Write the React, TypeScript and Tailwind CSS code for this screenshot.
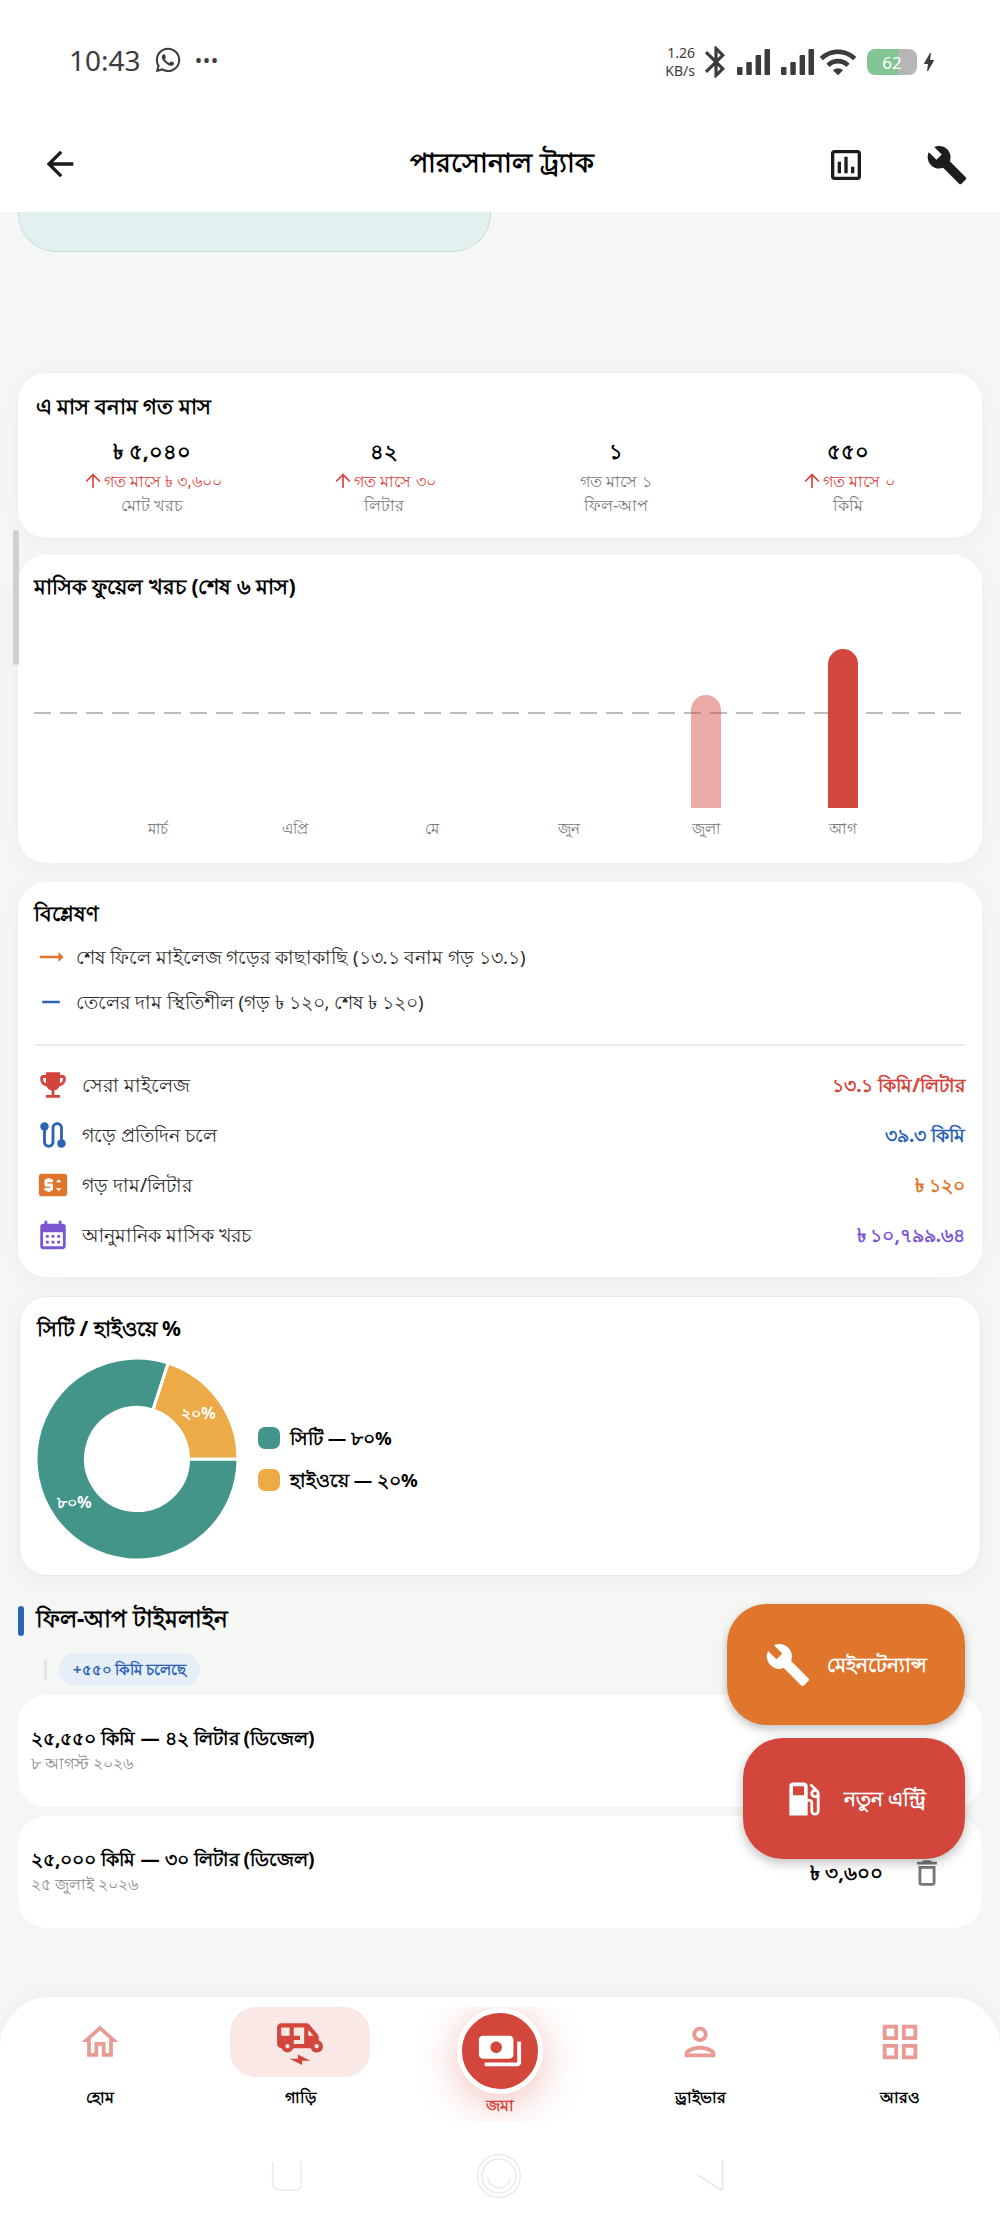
import type { ReactNode } from 'react';
import { ArrowUp } from 'lucide-react';
import { FaWhatsapp } from 'react-icons/fa';
import {
  MdArrowBack,
  MdBluetooth,
  MdBolt,
  MdBuild,
  MdCalendarMonth,
  MdDeleteOutline,
  MdElectricRickshaw,
  MdEmojiEvents,
  MdGridView,
  MdLocalGasStation,
  MdOutlineAssessment,
  MdOutlineHome,
  MdOutlinePerson,
  MdPayments,
  MdPriceChange,
  MdRemove,
  MdRoute,
  MdTrendingFlat,
  MdWifi,
} from 'react-icons/md';

const stats = [
  { value: '৳ ৫,০৪০', change: 'গত মাসে ৳ ৩,৬০০', label: 'মোট খরচ', up: true },
  { value: '৪২', change: 'গত মাসে ৩০', label: 'লিটার', up: true },
  { value: '১', change: 'গত মাসে ১', label: 'ফিল-আপ', up: false },
  { value: '৫৫০', change: 'গত মাসে ০', label: 'কিমি', up: true },
];

const months = [
  { name: 'মার্চ', bar: '' },
  { name: 'এপ্রি', bar: '' },
  { name: 'মে', bar: '' },
  { name: 'জুন', bar: '' },
  { name: 'জুলা', bar: 'h-[113px] bg-[#d2463c]/45' },
  { name: 'আগ', bar: 'h-[159px] bg-[#d2483e]' },
];

const metrics = [
  { icon: MdEmojiEvents, label: 'সেরা মাইলেজ', value: '১৩.১ কিমি/লিটার', color: 'text-[#d2443c]' },
  { icon: MdRoute, label: 'গড়ে প্রতিদিন চলে', value: '৩৯.৩ কিমি', color: 'text-[#2b63b5]' },
  { icon: MdPriceChange, label: 'গড় দাম/লিটার', value: '৳ ১২০', color: 'text-[#e0752c]' },
  { icon: MdCalendarMonth, label: 'আনুমানিক মাসিক খরচ', value: '৳ ১০,৭৯৯.৬৪', color: 'text-[#7a57d1]' },
];

const fillups = [
  { title: '২৫,৫৫০ কিমি — ৪২ লিটার (ডিজেল)', date: '৮ আগস্ট ২০২৬', price: '৳ ৫,০৪০' },
  { title: '২৫,০০০ কিমি — ৩০ লিটার (ডিজেল)', date: '২৫ জুলাই ২০২৬', price: '৳ ৩,৬০০' },
];

function Card({ className, children }: { className: string; children: ReactNode }) {
  return <section className={`mx-[18px] rounded-[28px] bg-white shadow-[0_4px_20px_rgba(0,0,0,0.045)] ${className}`}>{children}</section>;
}

function SignalBars({ className }: { className: string }) {
  return (
    <svg viewBox="0 0 33 26" className={`h-[26px] w-[33px] ${className}`} fill="currentColor">
      <rect x="0" y="18" width="5.5" height="8" rx="1" />
      <rect x="9.3" y="13" width="5.5" height="13" rx="1" />
      <rect x="18.6" y="6" width="5.5" height="20" rx="1" />
      <rect x="27.5" y="0" width="5.5" height="26" rx="1" />
    </svg>
  );
}

function StatusBar() {
  return (
    <div className="flex h-[120px] items-start justify-between bg-white pl-[69px] pr-[59px] pt-[42px] text-[#3c3c3c]">
      <div className="flex items-center">
        <span className="text-[28px] leading-[36px]">10:43</span>
        <FaWhatsapp className="ml-[13px] h-[28px] w-[28px]" />
        <span className="ml-[14px] text-[16px] font-bold leading-[20px] tracking-[2px]">•••</span>
      </div>
      <div className="flex items-center">
        <div className="text-right text-[14px] leading-[18px]">
          1.26
          <br />
          KB/s
        </div>
        <MdBluetooth className="ml-[2px] h-[38px] w-[38px]" />
        <SignalBars className="ml-[2px]" />
        <SignalBars className="ml-[11px]" />
        <MdWifi className="ml-[4px] h-[40px] w-[40px]" />
        <div className="ml-[9px] flex h-[26px] w-[50px] items-center justify-center overflow-hidden rounded-[8px] bg-[linear-gradient(90deg,#82c592_63%,#b6b6b6_63%)] text-[17px] leading-none text-white">
          62
        </div>
        <MdBolt className="h-[24px] w-[24px]" />
      </div>
    </div>
  );
}

function Header() {
  return (
    <header className="flex h-[92px] items-start justify-between bg-white pl-[40px] pr-[32px] pt-[24px]">
      <MdArrowBack className="h-[40px] w-[40px] text-[#1c1c1c]" />
      <h1 className="ml-[98px] text-[27px] font-bold leading-[36px] text-black">পারসোনাল ট্র্যাক</h1>
      <div className="flex items-center gap-[60px]">
        <MdOutlineAssessment className="h-[40px] w-[40px] text-[#1c1c1c]" />
        <MdBuild className="h-[42px] w-[42px] text-[#1c1c1c]" />
      </div>
    </header>
  );
}

function NavItem({ icon, label }: { icon: ReactNode; label: string }) {
  return (
    <div className="flex flex-col items-center">
      <div className="flex h-[70px] items-center justify-center">{icon}</div>
      <span className="mt-[5px] text-[16px] font-bold leading-[30px] text-black">{label}</span>
    </div>
  );
}

function SystemKeys() {
  return (
    <div className="flex items-center justify-center gap-[173px] pr-[2px] pt-[31px]">
      <svg viewBox="0 0 36 36" className="h-[32px] w-[32px]" fill="none" stroke="#eeeeee" strokeWidth="2">
        <path d="M2 2v25a7 7 0 0 0 7 7h18a7 7 0 0 0 7-7V2" />
      </svg>
      <svg viewBox="0 0 46 46" className="h-[46px] w-[46px]" fill="none" stroke="#ebebeb" strokeWidth="1.6">
        <circle cx="23" cy="23" r="21.5" />
        <circle cx="23" cy="23" r="17" />
        <path d="M12 24a11 11 0 0 0 22 0" />
      </svg>
      <svg viewBox="0 0 36 36" className="h-[32px] w-[32px]" fill="none" stroke="#e8e8e8" strokeWidth="2">
        <path d="M3 17 28 33a2 2 0 0 0 3-2V1" />
      </svg>
    </div>
  );
}

export default function App() {
  return (
    <div className="relative flex h-[2225px] w-[1000px] flex-col overflow-hidden bg-[#f5f7f5] font-['Noto_Sans',sans-serif]">
      <StatusBar />
      <Header />

      <main className="min-h-0 flex-1 overflow-hidden">
        <div className="ml-[18px] h-[40px] w-[473px] rounded-b-[38px] border border-t-0 border-[#c4dbdc] bg-[#e2f0f0]" />

        <Card className="mt-[121px] h-[165px] pt-[17px]">
          <h2 className="pl-[18px] text-[21px] font-bold leading-[32px] text-black">এ মাস বনাম গত মাস</h2>
          <div className="mt-[15px] grid grid-cols-4 px-[18px]">
            {stats.map((s) => (
              <div key={s.label} className="flex flex-col items-center">
                <div className="text-[21px] font-bold leading-[28px] text-black">{s.value}</div>
                <div className={`mt-[4px] flex items-center text-[15.5px] leading-[24px] ${s.up ? 'text-[#d9433a]' : 'text-[#777]'}`}>
                  {s.up && <ArrowUp className="h-[22px] w-[22px]" strokeWidth={1.8} />}
                  {s.change}
                </div>
                <div className="text-[16px] leading-[24px] text-[#777]">{s.label}</div>
              </div>
            ))}
          </div>
        </Card>

        <Card className="mt-[17px] h-[308px] pt-[15px]">
          <h2 className="pl-[16px] text-[21px] font-bold leading-[32px] text-black">মাসিক ফুয়েল খরচ (শেষ ৬ মাস)</h2>
          <div className="relative mx-[16px] mt-[43px] h-[199px]">
            <div className="absolute inset-x-0 top-[67px] h-[2px] bg-[repeating-linear-gradient(90deg,#bcbcbc_0_17px,transparent_17px_26px)]" />
            <div className="relative grid h-full grid-cols-6 px-[55px]">
              {months.map((m) => (
                <div key={m.name} className="flex flex-col items-center justify-end">
                  <div className={`w-[30px] rounded-t-[15px] ${m.bar}`} />
                  <div className="mt-[6px] h-[30px] text-[15px] leading-[28px] text-[#777]">{m.name}</div>
                </div>
              ))}
            </div>
          </div>
        </Card>

        <Card className="mt-[19px] h-[395px] pt-[15px]">
          <h2 className="pl-[16px] text-[20.5px] font-bold leading-[32px] text-black">বিশ্লেষণ</h2>
          <div className="mt-[13px] flex flex-col gap-[15px] pl-[18px]">
            <div className="flex h-[30px] items-center text-[18.5px] text-[#2a2a2a]">
              <MdTrendingFlat className="h-[30px] w-[30px] text-[#e0752c]" />
              <span className="ml-[10px]">শেষ ফিলে মাইলেজ গড়ের কাছাকাছি (১৩.১ বনাম গড় ১৩.১)</span>
            </div>
            <div className="flex h-[30px] items-center text-[18.5px] text-[#2a2a2a]">
              <MdRemove className="h-[30px] w-[30px] text-[#2b63b5]" />
              <span className="ml-[10px]">তেলের দাম স্থিতিশীল (গড় ৳ ১২০, শেষ ৳ ১২০)</span>
            </div>
          </div>
          <div className="mx-[17px] mt-[27px] h-[2px] bg-[#ebebeb]" />
          <div className="mt-[24px] flex flex-col gap-[20px] pl-[18px] pr-[17px]">
            {metrics.map((m) => (
              <div key={m.label} className="flex h-[30px] items-center">
                <m.icon className={`h-[34px] w-[34px] ${m.color}`} />
                <span className="ml-[12px] flex-1 text-[19.3px] text-[#2a2a2a]">{m.label}</span>
                <span className={`text-[18.7px] font-bold ${m.color}`}>{m.value}</span>
              </div>
            ))}
          </div>
        </Card>

        <Card className="mx-[19px] mt-[19px] h-[280px] border border-[#e9ebe9] pt-[15px]">
          <h2 className="pl-[17px] text-[21px] font-bold leading-[32px] text-black">সিটি / হাইওয়ে %</h2>
          <div className="mt-[14px] flex items-center pl-[16px]">
            <svg viewBox="0 0 200 200" className="h-[202px] w-[202px]">
              <path d="M200 100 A100 100 0 1 1 130.9 4.9 L115.8 51.5 A51 51 0 1 0 151 100 Z" fill="#43958a" stroke="white" strokeWidth="3" />
              <path d="M130.9 4.9 A100 100 0 0 1 200 100 L151 100 A51 51 0 0 0 115.8 51.5 Z" fill="#edab47" stroke="white" strokeWidth="3" />
              <text x="161" y="60" fill="white" fontSize="16" fontWeight="700" textAnchor="middle">২০%</text>
              <text x="38" y="149" fill="white" fontSize="16" fontWeight="700" textAnchor="middle">৮০%</text>
            </svg>
            <div className="ml-[20px] flex flex-col gap-[18px]">
              <div className="flex items-center gap-[10px]">
                <span className="h-[22px] w-[22px] rounded-[7px] bg-[#43958a]" />
                <span className="text-[18.5px] font-bold leading-[24px] text-black">সিটি — ৮০%</span>
              </div>
              <div className="flex items-center gap-[10px]">
                <span className="h-[22px] w-[22px] rounded-[7px] bg-[#edab47]" />
                <span className="text-[18.5px] font-bold leading-[24px] text-black">হাইওয়ে — ২০%</span>
              </div>
            </div>
          </div>
        </Card>

        <div className="mt-[30px] flex h-[30px] items-center pl-[18px]">
          <span className="h-[30px] w-[6px] rounded-full bg-[#2b63b5]" />
          <h2 className="mb-[6px] ml-[12px] text-[23px] font-bold leading-[30px] text-black">ফিল-আপ টাইমলাইন</h2>
        </div>
        <div className="mt-[17px] flex h-[33px] items-center pl-[44px]">
          <span className="h-[21px] w-[3px] bg-[#e3e5e3]" />
          <span className="ml-[12px] rounded-full bg-[#e6eef8] px-[14px] text-[15px] font-bold leading-[33px] text-[#2b63b5]">+৫৫০ কিমি চলেছে</span>
        </div>

        <div className="mt-[9px] flex flex-col gap-[9px]">
          {fillups.map((f) => (
            <div key={f.date} className="mx-[18px] flex h-[112px] items-start rounded-[28px] bg-white pl-[13px] pr-[38px] pt-[29px]">
              <div className="flex-1">
                <div className="text-[19.2px] font-bold leading-[28px] text-black">{f.title}</div>
                <div className="text-[16px] leading-[22px] text-[#888]">{f.date}</div>
              </div>
              <div className="pt-[16px] text-[20px] font-bold leading-[24px] text-black">{f.price}</div>
              <MdDeleteOutline className="ml-[27px] mt-[11px] h-[34px] w-[34px] text-[#777]" />
            </div>
          ))}
        </div>
      </main>

      <nav className="h-[228px] rounded-t-[50px] bg-white shadow-[0_-4px_16px_rgba(0,0,0,0.03)]">
        <div className="grid h-[125px] grid-cols-5 overflow-hidden pt-[10px]">
          <NavItem icon={<MdOutlineHome className="h-[44px] w-[44px] text-[#e89a93]" />} label="হোম" />
          <div className="flex flex-col items-center">
            <div className="flex h-[70px] w-[140px] items-center justify-center rounded-[26px] bg-[#fae8e7]">
              <MdElectricRickshaw className="h-[50px] w-[50px] text-[#d2463c]" />
            </div>
            <span className="mt-[5px] text-[16px] font-bold leading-[30px] text-black">গাড়ি</span>
          </div>
          <div className="flex flex-col items-center overflow-hidden">
            <div className="mt-[1px] flex h-[86px] w-[86px] shrink-0 items-center justify-center rounded-full border-[5px] border-white bg-[#d2463c] shadow-[0_8px_40px_rgba(210,70,60,0.35)]">
              <MdPayments className="h-[46px] w-[46px] text-white" />
            </div>
            <span className="text-[16px] font-bold leading-[22px] text-[#d9433a]">জমা</span>
          </div>
          <NavItem icon={<MdOutlinePerson className="h-[46px] w-[46px] text-[#e89a93]" />} label="ড্রাইভার" />
          <NavItem icon={<MdGridView className="h-[46px] w-[46px] text-[#e89a93]" />} label="আরও" />
        </div>
        <SystemKeys />
      </nav>

      {/* floating buttons sit over the timeline */}
      <div className="absolute right-[35px] top-[1604px] flex flex-col items-end gap-[13px]">
        <button className="flex h-[121px] w-[238px] items-center justify-center gap-[16px] rounded-[40px] bg-[#e0752c] text-[20px] font-bold text-white shadow-[0_4px_10px_rgba(0,0,0,0.25)]">
          <MdBuild className="h-[46px] w-[46px]" />
          মেইনটেন্যান্স
        </button>
        <button className="flex h-[121px] w-[222px] items-center justify-center gap-[18px] rounded-[40px] bg-[#d2463c] text-[20px] font-bold text-white shadow-[0_4px_12px_rgba(0,0,0,0.25)]">
          <MdLocalGasStation className="h-[44px] w-[44px]" />
          নতুন এন্ট্রি
        </button>
      </div>

      <div className="absolute left-[13px] top-[530px] h-[135px] w-[6px] rounded-full bg-[#cfd1cf]" />
    </div>
  );
}
